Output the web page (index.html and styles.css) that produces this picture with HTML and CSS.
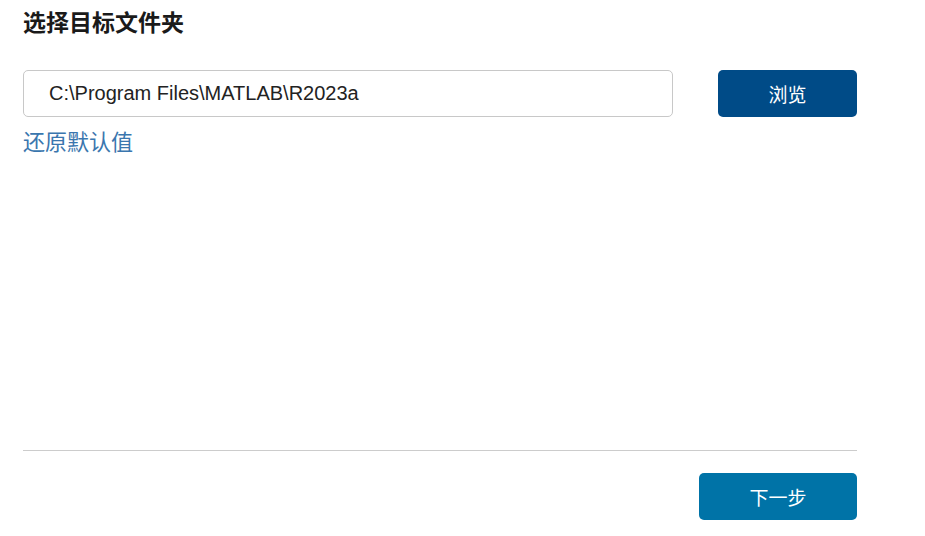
FILE: index.html
```html
<!DOCTYPE html>
<html lang="zh">
<head>
  <meta charset="UTF-8">
  <title>选择目标文件夹</title>
  <link rel="stylesheet" href="styles.css">
</head>
<body>
  <div class="page">
    <div class="content">
      <h1 class="title">选择目标文件夹</h1>
      <div class="folder-row">
        <input class="folder-input" type="text" value="C:\Program Files\MATLAB\R2023a">
        <button class="btn btn-browse">浏览</button>
      </div>
      <a class="reset-link" href="#">还原默认值</a>
    </div>
    <div class="footer">
      <button class="btn btn-next">下一步</button>
    </div>
  </div>
</body>
</html>
```

FILE: styles.css
```css
html, body{
  margin: 0;
  padding: 0;
  background-color: #ffffff;
}

body{
  font-family: "Liberation Sans", "Noto Sans CJK SC", sans-serif;
  color: #222222;
}

.page{
  width: 834px;
  height: 536px;
  box-sizing: border-box;
  margin-left: 23px;
  padding-top: 10px;
  padding-bottom: 16px;
  display: flex;
  flex-direction: column;
}

.content{
  flex: 1;
}

.title{
  margin: 0;
  font-size: 23px;
  line-height: 27px;
  font-weight: bold;
  color: #1a1a1a;
}

.folder-row{
  display: flex;
  gap: 45px;
  margin-top: 33px;
}

.folder-input{
  width: 650px;
  height: 47px;
  box-sizing: border-box;
  padding: 0 0 0 25px;
  border: 1px solid #c8c8c8;
  border-radius: 5px;
  font-family: "Liberation Sans", "Noto Sans CJK SC", sans-serif;
  font-size: 20px;
  color: #222222;
  outline: none;
}

.btn{
  height: 47px;
  border: none;
  border-radius: 5px;
  color: #ffffff;
  font-family: "Noto Sans CJK SC", sans-serif;
  font-size: 19px;
  cursor: pointer;
}

.btn-browse{
  width: 139px;
  background-color: #004b87;
}

.reset-link{
  display: inline-block;
  margin-top: 9px;
  font-family: "Noto Sans CJK SC", sans-serif;
  font-size: 22px;
  line-height: 29px;
  color: #3a76ae;
  text-decoration: none;
}

.footer{
  border-top: 1px solid #cccccc;
  padding-top: 22px;
  display: flex;
  justify-content: flex-end;
}

.btn-next{
  width: 158px;
  background-color: #0073a7;
}
```
